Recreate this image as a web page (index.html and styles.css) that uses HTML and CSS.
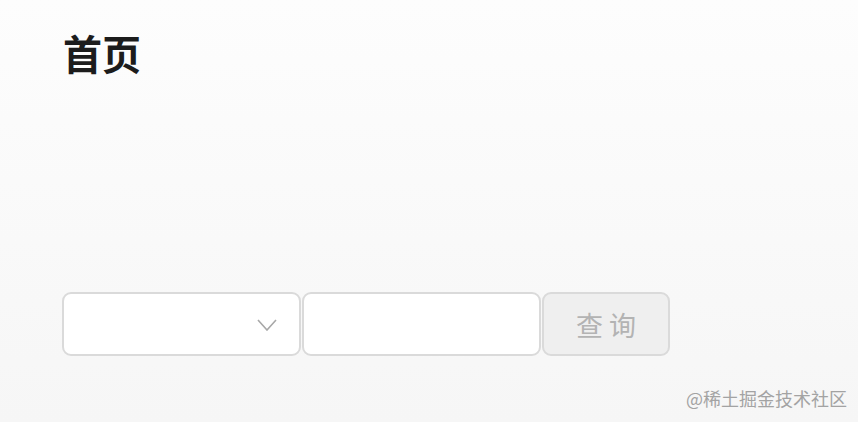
FILE: index.html
```html
<!DOCTYPE html>
<html>
<head>
  <meta charset="utf-8">
  <title>首页</title>
  <link rel="stylesheet" href="styles.css">
</head>
<body>
  <div class="page">
    <h1 class="title">首页</h1>

    <div class="search-bar">
      <div class="select-box">
        <svg class="chevron" width="20" height="12" viewBox="0 0 20 12">
          <polyline points="1,1 10,11 19,1" fill="none" stroke="#a8a8a8" stroke-width="1.6"/>
        </svg>
      </div>
      <div class="text-box"></div>
      <button class="query-btn" disabled>查 询</button>
    </div>

    <div class="watermark">@稀土掘金技术社区</div>
  </div>
</body>
</html>
```

FILE: styles.css
```css
html, body {
  margin: 0;
  height: 100%;
}
body {
  font-family: "Noto Sans CJK SC", "Noto Sans", sans-serif;
  background: linear-gradient(to bottom, #fdfdfd, #f6f6f6);
}
.page {
  position: relative;
  height: 422px;
  padding: 0 0 0 62px;
  box-sizing: border-box;
  display: flex;
  flex-direction: column;
}
.title {
  margin: 22px 0 0 1px;
  font-size: 39px;
  font-weight: 700;
  line-height: 56px;
  color: #1c1c1c;
  transform: scaleY(1.06);
  transform-origin: left top;
}
.search-bar {
  display: flex;
  gap: 1px;
  margin-top: 214px;
}
.select-box,
.text-box {
  width: 239px;
  height: 64px;
  box-sizing: border-box;
  border: 2px solid #dadada;
  border-radius: 9px;
  background: #fff;
}
.select-box {
  display: flex;
  align-items: center;
  justify-content: flex-end;
  padding-right: 22px;
}
.chevron {
  margin-top: 2px;
}
.query-btn {
  width: 128px;
  height: 64px;
  border: 2px solid #dadada;
  border-radius: 9px;
  background: #efefef;
  color: #b3b3b3;
  font-family: "Noto Sans CJK SC", sans-serif;
  font-size: 27px;
  padding: 0;
}
.watermark {
  position: absolute;
  right: 11px;
  bottom: 11px;
  font-size: 18px;
  color: #a3a3a3;
}
```
